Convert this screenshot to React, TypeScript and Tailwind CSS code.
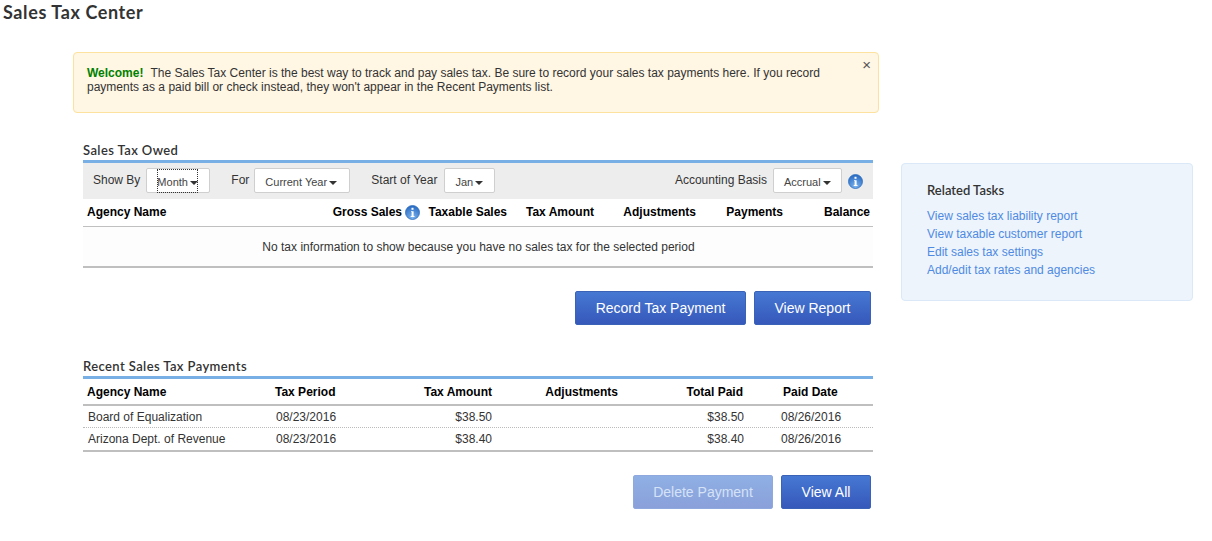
import React from 'react';

const body = "[font-family:'Liberation_Sans',Arial,sans-serif]";

const InfoIcon = () => (
  <svg width="15" height="15" viewBox="0 0 15 15" className="shrink-0">
    <defs>
      <radialGradient id="infoFill" cx="50%" cy="85%" r="80%">
        <stop offset="0%" stopColor="#7db4ee" />
        <stop offset="100%" stopColor="#2a6cc4" />
      </radialGradient>
    </defs>
    <circle cx="7.5" cy="7.5" r="7" fill="url(#infoFill)" stroke="#2f6fbe" strokeWidth="0.8" />
    <rect x="6.5" y="2.8" width="2" height="2" fill="#fff" />
    <path d="M6 6.2h2.6v4.9h.9v.9H5.7v-.9h.9V7.1H6z" fill="#fff" />
  </svg>
);

const Select = ({ label, width, focused }: { label: string; width: string; focused?: boolean }) => (
  <div className={`relative flex h-[25px] items-center rounded-[2px] border border-[#cfcfcf] bg-white pl-[10px] pt-[3px] text-[11px] text-[#444] ${width}`}>
    <span>{label}</span>
    <span className="ml-[2px] mt-[1px] h-0 w-0 border-x-[4px] border-t-[4px] border-x-transparent border-t-[#333]" />
    {focused && <div className="absolute left-[10px] top-0 h-[24px] w-[41px] border border-dotted border-[#333]" />}
  </div>
);

const Button = ({ label, width, disabled }: { label: string; width: string; disabled?: boolean }) => (
  <button
    className={`h-[34px] rounded-[2px] border text-[14px] ${width} ${
      disabled
        ? 'border-[#8fa9df] bg-gradient-to-b from-[#8fb0e4] to-[#8aa0da] text-[#d5e2f6]'
        : 'border-[#3a63b8] bg-gradient-to-b from-[#4678d2] to-[#3658bb] text-white'
    }`}
  >
    {label}
  </button>
);

const SectionTitle = ({ children }: { children: string }) => (
  <div className="h-[20px] text-[13px] font-semibold leading-[20px] tracking-[0.4px] text-[#333] [font-family:Lato,sans-serif]">
    {children}
  </div>
);

const payments = [
  { agency: 'Board of Equalization', period: '08/23/2016', amount: '$38.50', paid: '$38.50', date: '08/26/2016' },
  { agency: 'Arizona Dept. of Revenue', period: '08/23/2016', amount: '$38.40', paid: '$38.40', date: '08/26/2016' },
];

const links = [
  'View sales tax liability report',
  'View taxable customer report',
  'Edit sales tax settings',
  'Add/edit tax rates and agencies',
];

export default function App() {
  return (
    <div className={`h-[541px] w-[1212px] overflow-hidden bg-white text-[12px] text-[#333] ${body}`}>
      <h1 className="h-[52px] pl-[3px] pt-[1px] text-[18px] font-bold leading-[22px] tracking-[0.6px] text-[#333] [font-family:Lato,sans-serif]">
        Sales Tax Center
      </h1>

      <div className="flex pl-[73px]">
        <div className="w-[806px]">
          {/* Welcome banner */}
          <div className="relative h-[61px] rounded-[4px] border border-[#fde29f] bg-[#fff6e3] pl-[13px] pr-[40px] pt-[13px] leading-[14px]">
            <div className="flex gap-[7px]">
              <b className="text-[#008000]">Welcome!</b>
              <span>The Sales Tax Center is the best way to track and pay sales tax. Be sure to record your sales tax payments here. If you record</span>
            </div>
            <div>payments as a paid bill or check instead, they won't appear in the Recent Payments list.</div>
            <button className="absolute right-[7px] top-[4px] text-[15px] leading-[16px] text-[#555]">×</button>
          </div>

          {/* Sales tax owed */}
          <div className="ml-[10px] mt-[27px] w-[790px]">
            <SectionTitle>Sales Tax Owed</SectionTitle>
            <div className="flex h-[39px] items-start border-t-[3px] border-[#78b0e6] bg-[#ededed] pl-[10px] pt-[5px]">
              <span className="mr-[6px] mt-[3px]">Show By</span>
              <Select label="Month" width="w-[64px]" focused />
              <span className="ml-[21px] mr-[5px] mt-[3px]">For</span>
              <Select label="Current Year" width="w-[96px]" />
              <span className="ml-[21px] mr-[7px] mt-[3px]">Start of Year</span>
              <Select label="Jan" width="w-[51px]" />
              <span className="ml-auto mr-[6px] mt-[3px]">Accounting Basis</span>
              <Select label="Accrual" width="w-[69px]" />
              <span className="ml-[6px] mr-[10px] mt-[6px]"><InfoIcon /></span>
            </div>
            <div className="grid h-[28px] grid-cols-[337px_87px_87px_102px_87px_90px] items-center border-b border-[#c0c0c0] pb-[1px] font-bold text-black">
              <div className="flex items-center pl-[4px]">
                Agency Name
                <span className="ml-auto flex items-center gap-[3px]">Gross Sales <InfoIcon /></span>
              </div>
              <div className="text-right">Taxable Sales</div>
              <div className="text-right">Tax Amount</div>
              <div className="text-right">Adjustments</div>
              <div className="text-right">Payments</div>
              <div className="pr-[3px] text-right">Balance</div>
            </div>
            <div className="flex h-[41px] items-center justify-center border-b-2 border-[#bfbfbf] bg-[#fdfdfd] pl-[1px] pt-[1px]">
              No tax information to show because you have no sales tax for the selected period
            </div>
            <div className="mt-[23px] flex justify-end gap-[8px] pr-[2px]">
              <Button label="Record Tax Payment" width="w-[171px]" />
              <Button label="View Report" width="w-[117px]" />
            </div>
          </div>

          {/* Recent payments */}
          <div className="ml-[10px] mt-[31px] w-[790px]">
            <SectionTitle>Recent Sales Tax Payments</SectionTitle>
            <div className="grid h-[30px] grid-cols-[192px_100px_117px_126px_125px_130px] items-center border-t-[3px] border-b-2 border-t-[#78b0e6] border-b-[#bfbfbf] pt-[1px] font-bold text-black">
              <div className="pl-[4px]">Agency Name</div>
              <div>Tax Period</div>
              <div className="text-right">Tax Amount</div>
              <div className="text-right">Adjustments</div>
              <div className="text-right">Total Paid</div>
              <div className="pl-[40px]">Paid Date</div>
            </div>
            {payments.map((p, i) => (
              <div
                key={p.agency}
                className={`grid h-[22px] grid-cols-[193px_99px_117px_126px_126px_129px] items-center ${
                  i === 0 ? 'border-b border-dotted border-[#bbb]' : ''
                }`}
              >
                <div className="pl-[5px]">{p.agency}</div>
                <div>{p.period}</div>
                <div className="text-right">{p.amount}</div>
                <div />
                <div className="text-right">{p.paid}</div>
                <div className="pl-[37px]">{p.date}</div>
              </div>
            ))}
            <div className="flex justify-end gap-[8px] border-t-2 border-[#bfbfbf] pr-[2px] pt-[23px]">
              <Button label="Delete Payment" width="w-[140px]" disabled />
              <Button label="View All" width="w-[90px]" />
            </div>
          </div>
        </div>

        {/* Related tasks */}
        <div className="ml-[22px] mt-[111px] h-[138px] w-[292px] rounded-[4px] border border-[#dbe8f7] bg-[#edf4fc] pl-[25px] pt-[19px]">
          <div className="text-[13px] font-semibold leading-[14px] text-[#333] [font-family:Lato,sans-serif]">Related Tasks</div>
          <div className="mt-[10px] flex flex-col text-[#4f8ae2]">
            {links.map((l) => (
              <a key={l} className="h-[18px] leading-[18px]">{l}</a>
            ))}
          </div>
        </div>
      </div>
    </div>
  );
}
